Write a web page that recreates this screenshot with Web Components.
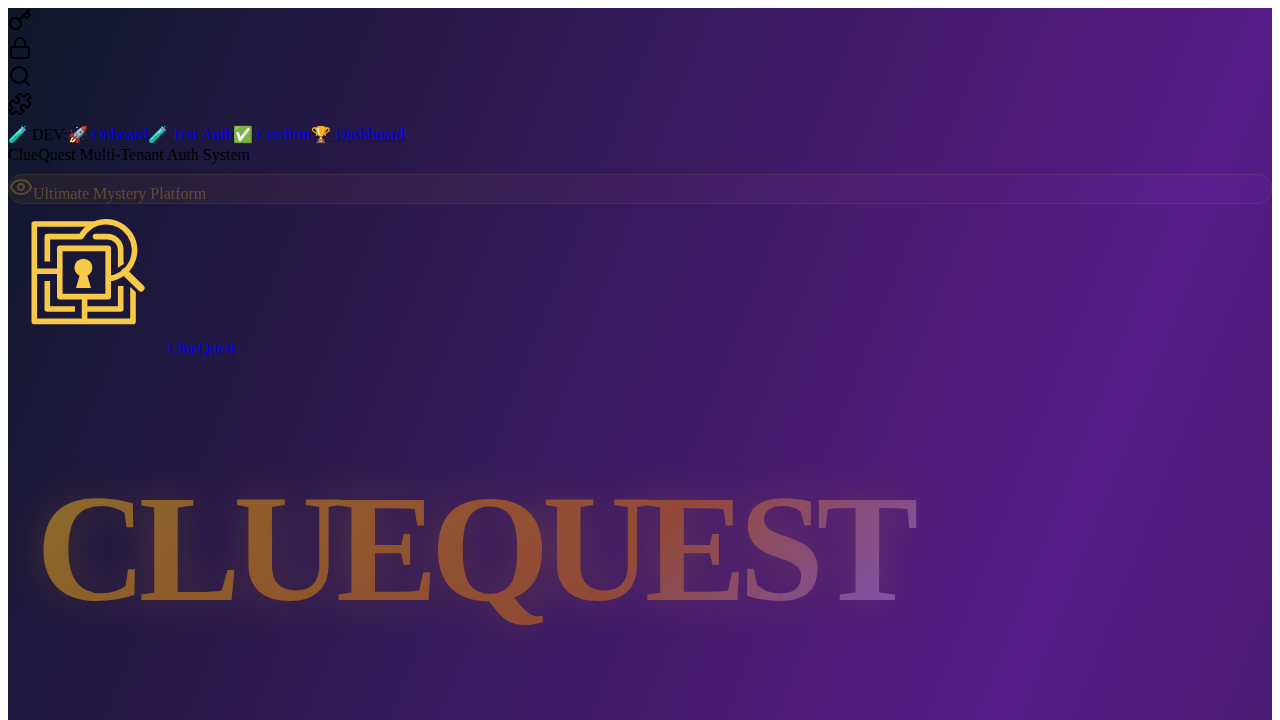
<!DOCTYPE html>
<html lang="en">
<head>
<meta charset="utf-8">
<meta name="viewport" content="width=device-width, initial-scale=1">
<title>ClueQuest</title>
<style>
  body { margin: 8px 8px 0; background: #fff; color: #000; font: 16px "Liberation Serif", "Noto Color Emoji", serif; }
</style>
</head>
<body>
<cq-page>
  <cq-icon name="key"></cq-icon>
  <cq-icon name="lock"></cq-icon>
  <cq-icon name="search"></cq-icon>
  <cq-icon name="puzzle"></cq-icon>
  <cq-dev-nav></cq-dev-nav>
  <cq-badge>Ultimate Mystery Platform</cq-badge>
  <cq-brand>ClueQuest</cq-brand>
  <cq-title>CLUEQUEST</cq-title>
</cq-page>

<script>
  const define = (name, html) => customElements.define(name, class extends HTMLElement {
    constructor() {
      super();
      this.attachShadow({ mode: 'open' }).innerHTML = html;
    }
  });

  const ICONS = {
    key: '<path d="m15.5 7.5 2.3 2.3a1 1 0 0 0 1.4 0l2.1-2.1a1 1 0 0 0 0-1.4L19 4"/><path d="m21 2-9.6 9.6"/><circle cx="7.5" cy="15.5" r="5.5"/>',
    lock: '<rect width="18" height="11" x="3" y="11" rx="2"/><path d="M7 11V7a5 5 0 0 1 10 0v4"/>',
    search: '<path d="m21 21-4.34-4.34"/><circle cx="11" cy="11" r="8"/>',
    puzzle: '<path d="M15.39 4.39a1 1 0 0 0 1.68-.474 2.5 2.5 0 1 1 3.014 3.015 1 1 0 0 0-.474 1.68l1.683 1.682a2.414 2.414 0 0 1 0 3.414L19.61 15.39a1 1 0 0 1-1.68-.474 2.5 2.5 0 1 0-3.014 3.015 1 1 0 0 1 .474 1.68l-1.683 1.682a2.414 2.414 0 0 1-3.414 0L8.61 19.61a1 1 0 0 0-1.68.474 2.5 2.5 0 1 1-3.014-3.015 1 1 0 0 0 .474-1.68l-1.683-1.682a2.414 2.414 0 0 1 0-3.414L4.39 8.61a1 1 0 0 1 1.68.474 2.5 2.5 0 1 0 3.014-3.015 1 1 0 0 1-.474-1.68l1.683-1.682a2.414 2.414 0 0 1 3.414 0z"/>',
    eye: '<path d="M2.062 12.348a1 1 0 0 1 0-.696 10.75 10.75 0 0 1 19.876 0 1 1 0 0 1 0 .696 10.75 10.75 0 0 1-19.876 0"/><circle cx="12" cy="12" r="3"/>'
  };

  customElements.define('cq-icon', class extends HTMLElement {
    constructor() {
      super();
      this.attachShadow({ mode: 'open' });
    }
    connectedCallback() {
      this.shadowRoot.innerHTML = `
        <style>
          :host { display: block; height: 28px; }
          svg { display: block; }
        </style>
        <svg width="24" height="24" viewBox="0 0 24 24" fill="none" stroke="currentColor" stroke-width="2"
             stroke-linecap="round" stroke-linejoin="round" aria-hidden="true">${ICONS[this.getAttribute('name')]}</svg>`;
    }
  });

  define('cq-page', `
    <style>
      :host {
        display: block;
        box-sizing: border-box;
        min-height: calc(100vh - 8px);
        background: linear-gradient(111deg, #0f172a 0, #581c87 1180px, #0f172a 2360px);
      }
    </style>
    <main><slot></slot></main>`);

  define('cq-dev-nav', `
    <style>
      :host { display: block; }
      nav { display: flex; height: 26px; line-height: 30px; white-space: pre; }
      a { color: #0000ee; text-decoration: underline; }
      p { margin: 0; line-height: 18px; }
    </style>
    <nav aria-label="Development"><span>🧪 DEV:</span><a href="#onboard">🚀 Onboard</a><a href="#auth">🧪 Test Auth</a><a href="#confirm">✅ Confirm</a><a href="#dashboard">🏆 Dashboard</a></nav>
    <p>ClueQuest Multi-Tenant Auth System</p>`);

  define('cq-badge', `
    <style>
      :host {
        display: flex;
        align-items: flex-start;
        margin-top: 10px;
        border: 1px solid rgba(251, 191, 36, .3);
        border-radius: 16px;
        background: linear-gradient(90deg, rgba(245, 158, 11, .2), rgba(147, 51, 234, .2));
        color: #fbbf24;
        opacity: .3;
      }
      span { line-height: 18px; padding-top: 10px; }
    </style>
    <cq-icon name="eye"></cq-icon><span><slot></slot></span>`);

  define('cq-brand', `
    <style>
      :host { display: block; }
      a { display: flex; align-items: flex-end; color: #0000ee; text-decoration: underline; }
      span { line-height: 18px; }
      svg { display: block; margin-bottom: 4px; }
    </style>
    <a href="#home">
      <svg width="160" height="150" viewBox="0 0 160 150" fill="none" stroke="#f7c948" stroke-width="5.6" stroke-linejoin="round" aria-hidden="true">
        <path d="M88 20H26.3V117.4H125V90"/>
        <path d="M122.2 83L127.8 88V91H122.2Z" fill="#f7c948" stroke="none"/>
        <path d="M39.3 57.4V32.6H73A28.5 28.5 0 1 1 100.4 74.6"/>
        <path d="M88 32.6H99.5A13.2 13.2 0 0 1 112.7 45.8V60"/>
        <circle cx="87.5" cy="32.6" r="2.8" fill="#f7c948" stroke="none"/>
        <path d="M109.9 58H115.5V60.2L109.9 63.8Z" fill="#f7c948" stroke="none"/>
        <path d="M51.8 44.4H100.2V92.6H51.8Z"/>
        <path d="M26 67.2H51.8M39.3 77V105H67M76.6 92.6V117.6M76.6 105H112.7V82"/>
        <path d="M116.6 68L133 84" stroke-width="7" stroke-linecap="round"/>
        <circle cx="75.4" cy="63.7" r="9" fill="#f7c948" stroke="none"/>
        <path d="M72 70H79L83 84H68Z" fill="#f7c948" stroke="none"/>
      </svg><span><slot></slot></span>
    </a>`);

  define('cq-title', `
    <style>
      :host { display: block; padding: 114px 28px 0; }
      h1 {
        width: fit-content;
        margin: 0;
        padding: 0 8px 16px 0;
        font-size: 153px;
        line-height: 153px;
        font-weight: 700;
        letter-spacing: -0.05em;
        color: transparent;
        background: linear-gradient(135deg, #fbbf24 0%, #f59e0b 25%, #e4780a 65%, #a78bfa 100%);
        -webkit-background-clip: text;
        background-clip: text;
        filter: drop-shadow(0 0 20px rgba(245, 158, 11, .4));
        opacity: .5;
      }
    </style>
    <h1><slot></slot></h1>`);
</script>
</body>
</html>
